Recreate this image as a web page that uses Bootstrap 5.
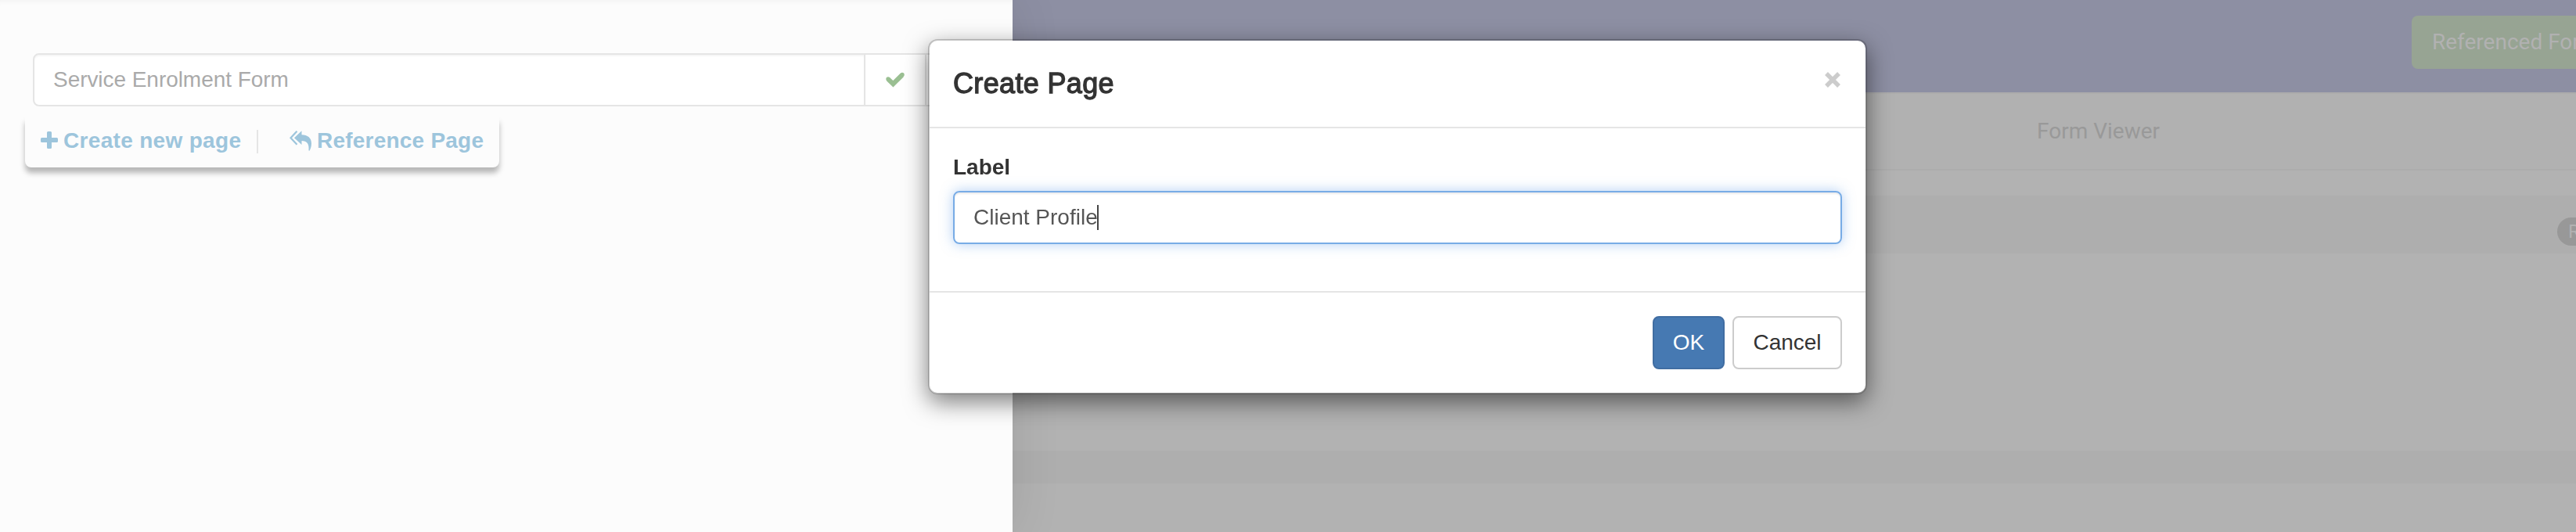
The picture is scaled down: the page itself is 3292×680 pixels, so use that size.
<!DOCTYPE html>
<html lang="en">
<head>
<meta charset="utf-8">
<title>Form Builder</title>
<link href="https://cdn.jsdelivr.net/npm/bootstrap@5.3.0/dist/css/bootstrap.min.css" rel="stylesheet">
<script src="https://cdn.jsdelivr.net/npm/bootstrap@5.3.0/dist/js/bootstrap.bundle.min.js"></script>
<style>
body{font-family:"Liberation Sans",Arial,sans-serif;font-size:28px;line-height:40px;color:#333;background:#b2b2b2;overflow:hidden}
.side-panel{width:1294px;background:#fcfcfc;padding:68px 0 0 42px;box-shadow:0 0 60px rgba(0,0,0,.1),inset 0 6px 6px -4px rgba(0,0,0,.04);z-index:2}
.name-group{width:1220px;height:68px}
.name-group .form-control,.name-group .cell{border:2px solid #e5e5e5;font-size:28px;color:#aaa;background:#fff}
.name-group .form-control{width:1064px;flex:none;border-radius:8px 0 0 8px;padding:0 24px;box-shadow:inset 0 2px 2px rgba(0,0,0,.04);letter-spacing:-.05px}
.name-group .cell{width:80px;margin-left:-2px}
.page-actions{width:606px;height:64px;margin:14px 0 0 -10px;padding:0 0 4px 19px;border-radius:0 0 8px 8px;box-shadow:0 7px 7px rgba(0,0,0,.28);clip-path:inset(0 -16px -24px -16px);background:#fcfcfc;font-weight:700;color:#9dc5dc}
.page-actions a{color:inherit;text-decoration:none;white-space:nowrap;line-height:32px}
.create-link{width:277px;letter-spacing:.32px}
.create-link svg{margin:-2px 6px 0 0}
.split{width:2px;height:30px;background:#e5e5e5;margin-top:2px}
.ref-link{margin-left:40px;letter-spacing:.22px}
.ref-link svg{margin:-1px 7px 0 0}
.workspace{font-family:Roboto,sans-serif;min-width:0}
.topbar{height:118px;background:#8d8fa3;padding:20px 0 0 1788px}
.btn-form{width:330px;height:68px;background:#97a493;border:0;border-radius:8px;font-size:28px;line-height:40px;padding:0 26px;color:#b1b1b1;text-align:left;flex:none}
.tabs-row{height:100px;border-top:2px solid #acacac;border-bottom:2px solid #acacac;background:#b1b1b1;padding-left:1309px;color:#999}
.band{background:#aeaeae}
.band-a{height:74px;margin-top:32px;padding-left:1974px}
.band-b{height:42px;margin-top:252px}
.pill{height:36px;width:150px;flex:none;background:#989898;color:#b1b1b1;border-radius:18px;font-size:24px;line-height:36px;padding-left:14px;margin-top:18px}
.modal{--bs-modal-width:1200px;padding:50px 0 0 1186px}
.modal-dialog{margin:0;max-width:1200px}
.modal-content{height:454px;border:2px solid rgba(0,0,0,.2);border-radius:12px;background-clip:padding-box;box-shadow:0 10px 30px rgba(0,0,0,.5)}
.modal-header{height:112px;padding:0 30px;border-bottom:2px solid #e5e5e5}
.modal-title{font-size:36px;line-height:40px;-webkit-text-stroke:1.3px #333;letter-spacing:.35px;margin-top:-1px}
.modal-header svg{margin:-10px 1px 0 0}
.modal-body{padding:30px 30px 0}
.modal-body label{font-weight:700;line-height:40px;margin:0 0 10px;display:block}
.field{height:68px;border:2px solid #78ace6;border-radius:8px;padding:0 24px;color:#555;box-shadow:inset 0 2px 2px rgba(0,0,0,.075),0 0 16px rgba(102,160,233,.5)}
.caret{width:2px;height:32px;background:#444;margin-left:-1px}
.modal-footer{height:130px;padding:0 30px;gap:10px;border-top:2px solid #e5e5e5}
.modal-footer .btn{height:68px;margin:0;padding:0;font-size:28px;border-width:2px;border-radius:8px}
.btn-ok{width:92px;color:#fff;background:#4679b2;border-color:#406da2}
.btn-plain{width:140px;color:#333;background:#fff;border-color:#ccc}
</style>
</head>
<body>
<div class="d-flex vh-100">
  <aside class="side-panel position-relative flex-shrink-0">
    <div class="name-group d-flex">
      <div class="form-control d-flex align-items-center">Service Enrolment Form</div>
      <div class="cell d-flex align-items-center justify-content-center">
        <svg width="24" height="20" viewBox="0 0 24 20"><path d="M3.200 9.300 9.400 15.200 20.700 4" fill="none" stroke="#9abf92" stroke-width="6"/><circle cx="3" cy="9" r="2.700" fill="#9abf92"/><circle cx="21" cy="3.400" r="2.700" fill="#9abf92"/></svg>
      </div>
      <div class="cell"></div>
    </div>
    <div class="page-actions d-flex align-items-center">
      <a href="#" class="create-link d-flex align-items-center"><svg width="24" height="24" viewBox="0 0 24 24"><path d="M10.500 1h3q1.500 0 1.500 1.500V9H21.500Q23 9 23 10.500v3q0 1.500-1.500 1.500H15v6.500q0 1.500-1.500 1.500h-3q-1.500 0-1.500-1.500V15H2.500Q1 15 1 13.500V10.500q0-1.500 1.500-1.500H9V2.500Q9 1 10.500 1z" fill="#9dc5dc"/></svg><span>Create new page</span></a>
      <div class="split"></div>
      <a href="#" class="ref-link d-flex align-items-center"><svg width="28" height="26" viewBox="0 0 28 26"><path d="M9.500.7 1.500 9.200 9.500 17.700" fill="none" stroke="#9dc5dc" stroke-width="2.200"/><path d="M15.500.3v5C23 5.500 28 9 28 16.500c0 4-1.200 7-2.600 9.300-.6.1-.9-.2-.9-.8C25.200 17 22.500 13.200 15.500 13v5L6 9.200z" fill="#9dc5dc"/></svg><span>Reference Page</span></a>
    </div>
  </aside>
  <main class="workspace flex-grow-1 overflow-hidden">
    <div class="topbar d-flex"><button class="btn-form">Referenced Forms</button></div>
    <div class="tabs-row d-flex align-items-center">Form Viewer</div>
    <div class="band band-a d-flex align-items-center"><span class="pill">Required</span></div>
    <div class="band band-b"></div>
  </main>
</div>

<div class="modal d-block" tabindex="-1">
  <div class="modal-dialog">
    <div class="modal-content">
      <div class="modal-header d-flex align-items-center justify-content-between">
        <h4 class="modal-title fw-normal">Create Page</h4>
        <svg width="22" height="22" viewBox="0 0 22 22"><path d="M3 3 19 19M19 3 3 19" stroke="#ccc" stroke-width="5.500"/></svg>
      </div>
      <div class="modal-body">
        <label>Label</label>
        <div class="field d-flex align-items-center"><span>Client Profile</span><span class="caret"></span></div>
      </div>
      <div class="modal-footer">
        <button class="btn btn-ok">OK</button>
        <button class="btn btn-plain">Cancel</button>
      </div>
    </div>
  </div>
</div>
</body>
</html>
